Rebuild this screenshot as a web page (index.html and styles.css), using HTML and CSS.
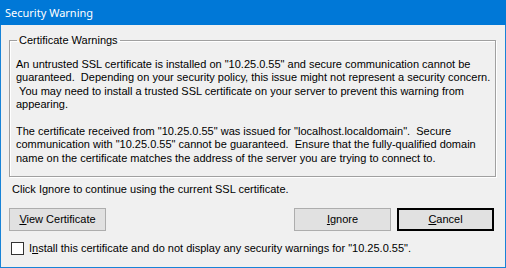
FILE: index.html
```html
<!DOCTYPE html>
<html lang="en">
<head>
    <meta charset="UTF-8">
    <title>Security Warning</title>
    <link rel="stylesheet" href="styles.css">
</head>
<body>
    <div class="window">
        <div class="title-bar">Security Warning</div>

        <div class="dialog-body">
            <fieldset class="group-box">
                <legend>Certificate Warnings</legend>
                <p>An untrusted SSL certificate is installed on "10.25.0.55" and secure communication cannot be<br>guaranteed.&nbsp; Depending on your security policy, this issue might not represent a security concern.<br>&nbsp;You may need to install a trusted SSL certificate on your server to prevent this warning from<br>appearing.</p>
                <p>The certificate received from "10.25.0.55" was issued for "localhost.localdomain".&nbsp; Secure<br>communication with "10.25.0.55" cannot be guaranteed.&nbsp; Ensure that the fully-qualified domain<br>name on the certificate matches the address of the server you are trying to connect to.</p>
            </fieldset>

            <div class="hint">Click Ignore to continue using the current SSL certificate.</div>

            <div class="button-row">
                <button class="btn"><u>V</u>iew Certificate</button>
                <div class="spacer"></div>
                <button class="btn"><u>I</u>gnore</button>
                <button class="btn btn-default"><u>C</u>ancel</button>
            </div>

            <label class="check-row">
                <span class="checkbox"></span>
                <span>I<u>n</u>stall this certificate and do not display any security warnings for "10.25.0.55".</span>
            </label>
        </div>
    </div>
</body>
</html>
```

FILE: styles.css
```css
* {
    margin: 0;
    padding: 0;
    box-sizing: border-box;
}

body {
    font-family: "Liberation Sans", Arial, sans-serif;
    font-size: 11px;
    line-height: 13px;
    color: #000000;
    background: #ffffff;
}

.window {
    width: 506px;
    height: 268px;
    border: 1px solid #1883d7;
    border-top: none;
    background: #f0f0f0;
    display: flex;
    flex-direction: column;
}

.title-bar {
    height: 25px;
    margin: 0 -1px;
    padding: 5px 0 0 5px;
    background: #0078d7;
    color: #ffffff;
    font-family: "Noto Sans", "Open Sans", sans-serif;
    font-size: 11px;
    line-height: 16px;
}

.dialog-body {
    flex: 1;
    padding: 9px 8px 0 8px;
    display: flex;
    flex-direction: column;
}

.group-box {
    border: 1px solid #a0a0a0;
    box-shadow: 1px 1px 0 #ffffff, inset 1px 1px 0 #ffffff;
    padding: 11px 2px 11px 6px;
    margin-right: 1px;
}

.group-box legend {
    margin-left: 1px;
    padding: 0 2px;
}

.group-box p {
    line-height: 13.4px;
    white-space: nowrap;
}

.group-box p + p {
    margin-top: 13.4px;
}

.hint {
    margin: 6px 0 0 3px;
}

.button-row {
    display: flex;
    gap: 6px;
    margin-top: 12px;
}

.spacer {
    flex: 1;
}

.btn {
    width: 97px;
    height: 23px;
    font: inherit;
    color: #000000;
    background: #e1e1e1;
    border: 1px solid #adadad;
}

.btn-default {
    border: 2px solid #000000;
    margin-right: 3px;
}

.btn u {
    text-decoration-thickness: 1px;
}

.check-row {
    display: flex;
    align-items: center;
    gap: 5px;
    margin: 11px 0 0 2px;
}

.checkbox {
    width: 13px;
    height: 13px;
    border: 1px solid #333333;
    background: #ffffff;
}
```
